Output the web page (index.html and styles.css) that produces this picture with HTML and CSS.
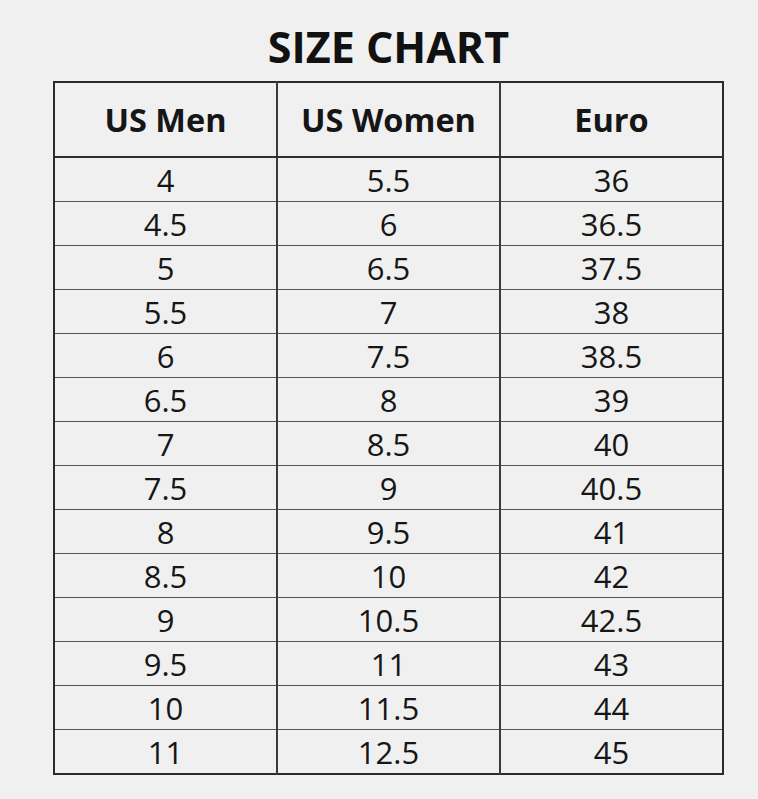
FILE: index.html
```html
<!DOCTYPE html>
<html>
<head>
<meta charset="utf-8">
<link rel="stylesheet" href="styles.css">
</head>
<body>
<div class="chart">
  <h1 class="title">SIZE CHART</h1>
  <table class="sizes">
    <colgroup><col class="c"><col class="c"><col class="c"></colgroup>
    <thead>
      <tr><th>US Men</th><th>US Women</th><th>Euro</th></tr>
    </thead>
    <tbody>
      <tr><td>4</td><td>5.5</td><td>36</td></tr>
      <tr><td>4.5</td><td>6</td><td>36.5</td></tr>
      <tr><td>5</td><td>6.5</td><td>37.5</td></tr>
      <tr><td>5.5</td><td>7</td><td>38</td></tr>
      <tr><td>6</td><td>7.5</td><td>38.5</td></tr>
      <tr><td>6.5</td><td>8</td><td>39</td></tr>
      <tr><td>7</td><td>8.5</td><td>40</td></tr>
      <tr><td>7.5</td><td>9</td><td>40.5</td></tr>
      <tr><td>8</td><td>9.5</td><td>41</td></tr>
      <tr><td>8.5</td><td>10</td><td>42</td></tr>
      <tr><td>9</td><td>10.5</td><td>42.5</td></tr>
      <tr><td>9.5</td><td>11</td><td>43</td></tr>
      <tr><td>10</td><td>11.5</td><td>44</td></tr>
      <tr><td>11</td><td>12.5</td><td>45</td></tr>
    </tbody>
  </table>
</div>
</body>
</html>
```
FILE: styles.css
```css
html, body {
  margin: 0;
  padding: 0;
  background: #f0f0f0;
}
body {
  font-family: "Open Sans", "DejaVu Sans", sans-serif;
  color: #161616;
}
.chart {
  width: 671px;
  margin-left: 53px;
  padding-top: 23px;
}
.title {
  margin: 0 0 10px;
  font-size: 43px;
  line-height: 48px;
  font-weight: 700;
  text-align: center;
  color: #111;
}
.sizes {
  width: 671px;
  border-collapse: collapse;
  table-layout: fixed;
  border: 2px solid #2b2b2b;
}
.sizes th, .sizes td {
  padding: 0;
  text-align: center;
  vertical-align: middle;
  border-left: 2px solid #3a3a3a;
}
.sizes th:first-child, .sizes td:first-child {
  border-left: none;
}
.sizes th {
  height: 73px;
  font-size: 32.5px;
  font-weight: 700;
  line-height: 40px;
  border-bottom: 2px solid #2e2e2e;
}
.sizes td {
  height: 43px;
  font-size: 31px;
  font-weight: 400;
  line-height: 40px;
  border-top: 1px solid #555;
}
.sizes tbody tr:first-child td {
  border-top: none;
}
```
